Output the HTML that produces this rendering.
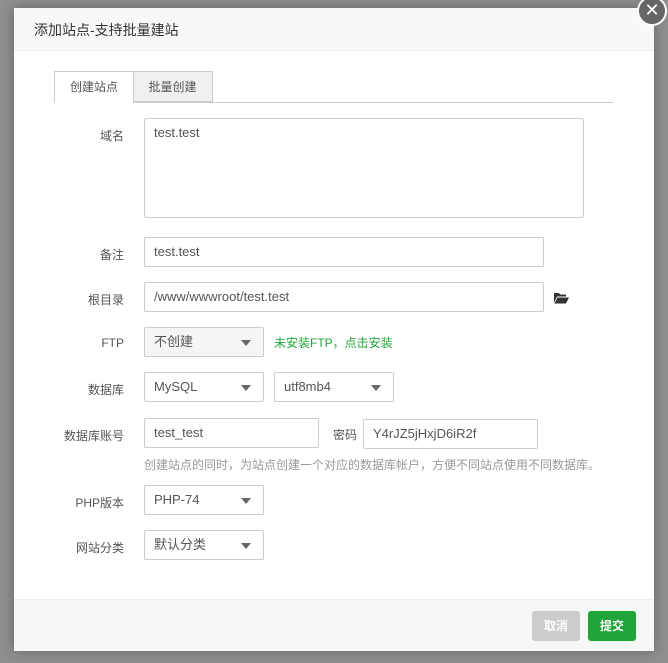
<!DOCTYPE html>
<html><head><meta charset="utf-8"><style>
body{margin:0;width:668px;height:663px;background:#8f8f8f;font-family:"Liberation Sans","Noto Sans CJK SC",sans-serif;font-size:12px;color:#555;position:relative;overflow:hidden}
.dlg{position:absolute;left:14px;top:8px;width:640px;height:643px;background:#fff;box-shadow:0 0 12px rgba(0,0,0,.3)}
.hd{height:42px;background:#f8f8f8;border-bottom:1px solid #eee;line-height:44px;padding-left:20px;font-size:14px;color:#333}
.close{position:absolute;left:637px;top:-4px;width:26px;height:26px;border-radius:50%;background:#666;border:2px solid #fff;color:#fff;text-align:center;line-height:25px;font-size:18px}
.a{position:absolute}
.lbl{position:absolute;width:110px;left:0;text-align:right;color:#555}
.in{position:absolute;border:1px solid #ccc;box-sizing:border-box;padding-left:9px;color:#555;font-size:13px;border-radius:2px}
.sel::after{content:"";position:absolute;right:12px;top:12px;border:5px solid transparent;border-top:6px solid #666;border-bottom:0}
.ft{position:absolute;left:0;bottom:0;width:640px;height:51px;background:#f6f8f8;border-top:1px solid #eee}
.btn{position:absolute;top:11px;width:48px;height:30px;border-radius:3px;color:#fff;text-align:center;line-height:30px;font-size:12px;font-weight:bold}
</style></head><body>
<div class="dlg">
<div class="hd">添加站点-支持批量建站</div>
<div class="a" style="left:40px;top:63px;width:80px;height:32px;border:1px solid #ccc;border-bottom:1px solid #fff;box-sizing:border-box;text-align:center;line-height:30px;background:#fff;z-index:2">创建站点</div>
<div class="a" style="left:119px;top:63px;width:80px;height:31px;border:1px solid #ccc;border-left:0;box-sizing:border-box;background:#f0f0f0;text-align:center;line-height:30px">批量创建</div>
<div class="a" style="left:40px;top:94px;width:559px;border-top:1px solid #ccc"></div>
<div class="lbl" style="top:119px">域名</div>
<div class="in" style="left:130px;top:110px;width:440px;height:100px;padding-top:6px">test.test</div>
<div class="lbl" style="top:238px">备注</div>
<div class="in" style="left:130px;top:229px;width:400px;height:30px;line-height:28px">test.test</div>
<div class="lbl" style="top:283px">根目录</div>
<div class="in" style="left:130px;top:274px;width:400px;height:30px;line-height:28px">/www/wwwroot/test.test</div>
<svg class="a" style="left:540px;top:284px" width="15" height="12" viewBox="0 0 15 12"><path d="M0 1h5l1 1.5h6v2H3L0 11z M3.5 5.5H15L12 11.5H0.5z" fill="#333"/></svg>
<div class="lbl" style="top:328px">FTP</div>
<div class="in sel" style="left:130px;top:319px;width:120px;height:30px;line-height:28px;background:#f5f5f5">不创建</div>
<div class="a" style="left:260px;top:326px;color:#20a53a">未安装FTP，点击安装</div>
<div class="lbl" style="top:373px">数据库</div>
<div class="in sel" style="left:130px;top:364px;width:120px;height:30px;line-height:28px">MySQL</div>
<div class="in sel" style="left:260px;top:364px;width:120px;height:30px;line-height:28px">utf8mb4</div>
<div class="lbl" style="top:419px">数据库账号</div>
<div class="in" style="left:130px;top:410px;width:175px;height:30px;line-height:28px">test_test</div>
<div class="a" style="left:319px;top:418px">密码</div>
<div class="in" style="left:349px;top:411px;width:175px;height:30px;line-height:28px">Y4rJZ5jHxjD6iR2f</div>
<div class="a" style="left:130px;top:448px;color:#999">创建站点的同时，为站点创建一个对应的数据库帐户，方便不同站点使用不同数据库。</div>
<div class="lbl" style="top:486px">PHP版本</div>
<div class="in sel" style="left:130px;top:477px;width:120px;height:30px;line-height:28px">PHP-74</div>
<div class="lbl" style="top:531px">网站分类</div>
<div class="in sel" style="left:130px;top:522px;width:120px;height:30px;line-height:28px">默认分类</div>
<div class="ft"><div class="btn" style="left:518px;background:#ccc">取消</div><div class="btn" style="left:574px;background:#20a53a">提交</div></div>
</div>
<div class="close">✕</div>
</body></html>
